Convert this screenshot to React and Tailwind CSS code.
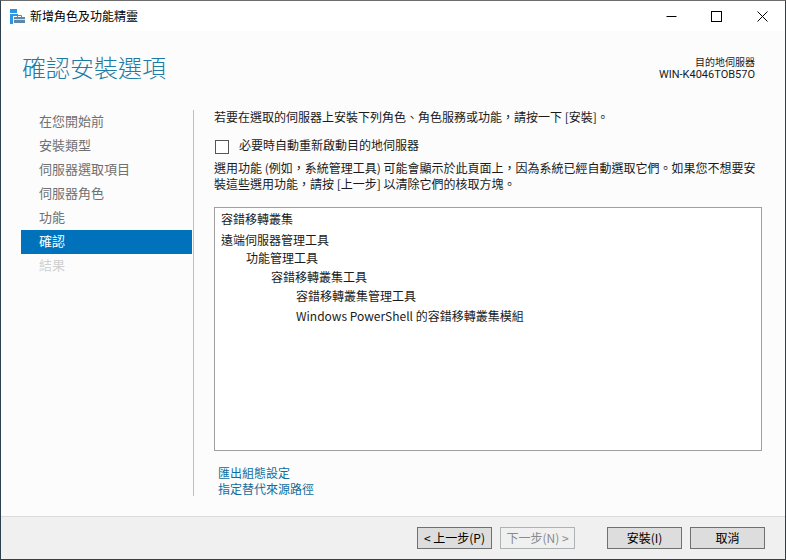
import React from 'react';

const steps = [
  { label: '在您開始前' },
  { label: '安裝類型' },
  { label: '伺服器選取項目' },
  { label: '伺服器角色' },
  { label: '功能' },
  { label: '確認', active: true },
  { label: '結果', disabled: true },
];

function WizardIcon() {
  return (
    <svg width="15" height="15" viewBox="0 0 15 15" className="shrink-0">
      <rect x="0" y="0" width="7" height="4" fill="#2b96e6" />
      <rect x="0" y="5" width="8" height="2" fill="#2b96e6" />
      <rect x="0" y="7" width="3" height="8" fill="#2b96e6" />
      <rect x="4" y="8" width="11" height="6" fill="#5f87a6" />
      <path d="M7.5 8V6.5H11.5V8" fill="none" stroke="#5f87a6" />
      <rect x="4" y="10" width="11" height="1" fill="#d5e0e8" />
    </svg>
  );
}

function WinButton({ children, disabled }) {
  return (
    <button
      disabled={disabled}
      className={
        disabled
          ? 'w-[75px] h-[22px] border border-[#adb2b5] bg-[#f0f0f0] text-[#8a8a8a] text-xs'
          : 'w-[75px] h-[22px] border border-[#707070] bg-[#dddddd] text-black text-xs'
      }
    >
      {children}
    </button>
  );
}

export default function App() {
  return (
    <div className="w-[786px] h-[560px] flex flex-col bg-[#fcfcfc] text-[#1a1a1a] text-xs font-['Noto_Sans_CJK_TC','Noto_Sans',sans-serif] overflow-hidden border border-[#2f3f4c] border-t-[#6d6d6d]">
      {/* Title bar */}
      <div className="h-[30px] bg-white flex items-center pl-[9px] shrink-0">
        <WizardIcon />
        <span className="ml-[5px] text-black">新增角色及功能精靈</span>
        <div className="ml-auto flex items-center pr-[17px] gap-[34px] text-black">
          <svg width="11" height="11" viewBox="0 0 11 11"><path d="M0.5 5.5H10.5" stroke="black" /></svg>
          <svg width="11" height="11" viewBox="0 0 11 11"><rect x="0.5" y="0.5" width="10" height="10" fill="none" stroke="black" /></svg>
          <svg width="11" height="11" viewBox="0 0 11 11" className="ml-px"><path d="M0.5 0.5L10.5 10.5M10.5 0.5L0.5 10.5" stroke="black" /></svg>
        </div>
      </div>

      {/* Header */}
      <div className="h-[79px] flex justify-between shrink-0 pl-[21px] pr-[30px]">
        <h1 className="text-[24px] font-light text-[#1e7ba6] mt-[18px] leading-[35px]">確認安裝選項</h1>
        <div className="text-right mt-[24px] text-[11px] leading-[13px]">
          <div className="text-[10px]">目的地伺服器</div>
          <div className="font-['Roboto',sans-serif]">WIN-K4046TOB57O</div>
        </div>
      </div>

      {/* Body */}
      <div className="flex-1 flex">
        <nav className="w-[171px] ml-[20px] mb-[20px] text-[13px]">
          {steps.map((s) => (
            <div
              key={s.label}
              className={
                s.active
                  ? 'h-[24px] pl-[18px] pb-[2px] flex items-center bg-[#0072bc] text-white'
                  : s.disabled
                    ? 'h-[24px] pl-[18px] pb-[2px] flex items-center text-[#d0d0d0]'
                    : 'h-[24px] pl-[18px] pb-[2px] flex items-center text-[#707070]'
              }
            >
              {s.label}
            </div>
          ))}
        </nav>

        <div className="ml-px w-px bg-[#c0c0c0] mb-[20px]" />

        <div className="flex-1 ml-[20px] mr-[23px] flex flex-col">
          <p className="leading-[14px]">若要在選取的伺服器上安裝下列角色、角色服務或功能，請按一下 [安裝]。</p>
          <label className="flex items-center mt-[16px] h-[14px]">
            <span className="w-[14px] h-[14px] border border-[#555] bg-white ml-px" />
            <span className="ml-[10px] pb-[4px]">必要時自動重新啟動目的地伺服器</span>
          </label>
          <p className="mt-[6px] leading-[16px]">
            選用功能 (例如，系統管理工具) 可能會顯示於此頁面上，因為系統已經自動選取它們。如果您不想要安裝這些選用功能，請按 [上一步] 以清除它們的核取方塊。
          </p>
          <div className="mt-[15px] h-[244px] border border-[#a0a0a0] bg-white pl-[6px] pt-[3px] leading-[16px]">
            <div>容錯移轉叢集</div>
            <div className="mt-[5px]">遠端伺服器管理工具</div>
            <div className="mt-[2px] pl-[25px]">功能管理工具</div>
            <div className="mt-[3px] pl-[50px]">容錯移轉叢集工具</div>
            <div className="mt-[3px] pl-[75px]">容錯移轉叢集管理工具</div>
            <div className="mt-[4px] pl-[75px]">Windows PowerShell 的容錯移轉叢集模組</div>
          </div>
          <div className="mt-[14px] pl-[4px] text-[#0f6d9e] leading-[16px]">
            <div>匯出組態設定</div>
            <div>指定替代來源路徑</div>
          </div>
        </div>
      </div>

      {/* Footer */}
      <div className="h-[43px] shrink-0 bg-[#f0f0f0] border-t border-[#dcdcdc] flex items-start pt-[10px] pl-[416px]">
        <WinButton>&lt; 上一步(P)</WinButton>
        <div className="ml-[8px]">
          <WinButton disabled>下一步(N) &gt;</WinButton>
        </div>
        <div className="ml-[32px]">
          <WinButton>安裝(I)</WinButton>
        </div>
        <div className="ml-[8px]">
          <WinButton>取消</WinButton>
        </div>
      </div>
    </div>
  );
}
